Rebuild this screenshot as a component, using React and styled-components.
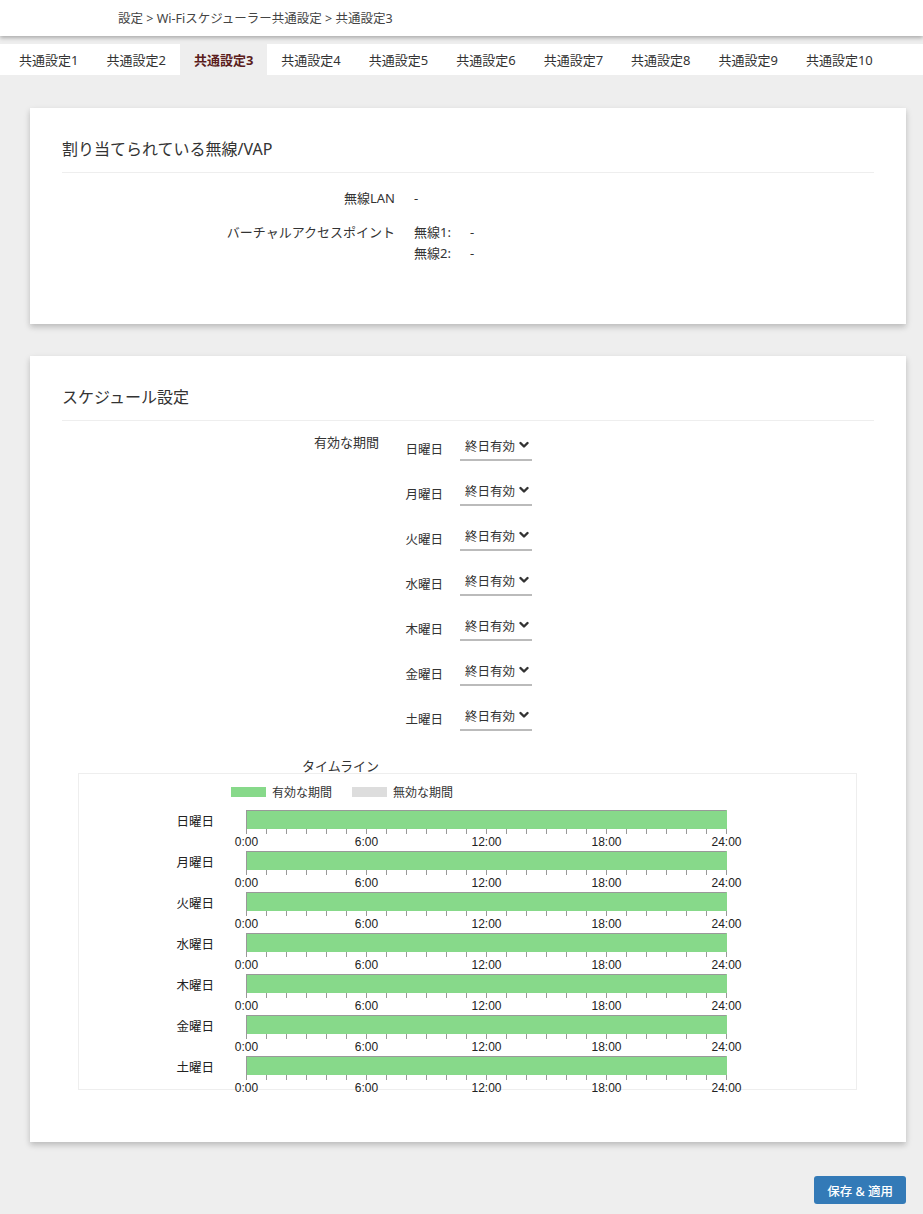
import styled, { createGlobalStyle } from 'styled-components';

const GlobalStyle = createGlobalStyle`
  body {
    margin: 0;
    background: #eeeeee;
    font-family: "Noto Sans", "Noto Sans CJK JP", sans-serif;
    color: #333333;
    font-size: 13px;
  }
`;

const tabs = ['共通設定1', '共通設定2', '共通設定3', '共通設定4', '共通設定5', '共通設定6', '共通設定7', '共通設定8', '共通設定9', '共通設定10'];
const days = ['日曜日', '月曜日', '火曜日', '水曜日', '木曜日', '金曜日', '土曜日'];

const Header = styled.header`
  height: 36px;
  background: #ffffff;
  box-shadow: 0 2px 4px rgba(0, 0, 0, 0.28);
  display: flex;
  align-items: center;
  padding-left: 118px;
  padding-bottom: 2px;
  box-sizing: border-box;
  font-size: 12.5px;
  color: #444444;
  position: relative;
  z-index: 1;
`;

const TabBar = styled.nav`
  margin-top: 8px;
  height: 31px;
  background: #ffffff;
  display: flex;
  padding-left: 5px;
`;

const Tab = styled.div`
  padding: 0 14px;
  display: flex;
  align-items: center;
  font-size: 13px;
  white-space: nowrap;
  background: ${(p) => (p.$active ? '#eeeeee' : 'transparent')};
  color: ${(p) => (p.$active ? '#5b1d1d' : '#333333')};
  font-weight: ${(p) => (p.$active ? 700 : 400)};
`;

const Main = styled.main`
  padding: 33px 17px 10px 30px;
  display: flex;
  flex-direction: column;
  gap: 32px;
`;

const Card = styled.section`
  background: #ffffff;
  box-shadow: 0 3px 6px rgba(0, 0, 0, 0.22);
  padding: 30px 32px ${(p) => p.$bottom ?? 32}px;
`;

const CardTitle = styled.h2`
  margin: 0;
  font-size: 16px;
  font-weight: 400;
  line-height: 22px;
  padding-bottom: 12px;
  border-bottom: 1px solid #eeeeee;
  color: #333333;
`;

const InfoList = styled.div`
  display: flex;
  flex-direction: column;
  gap: 13px;
  padding-top: 15px;
  padding-bottom: 60px;
`;

const InfoRow = styled.div`
  display: flex;
  gap: 19px;
  line-height: 21px;
`;

const InfoLabel = styled.div`
  width: ${(p) => p.$width}px;
  text-align: right;
  flex-shrink: 0;
`;

const InfoValues = styled.div`
  display: flex;
  flex-direction: column;
`;

const SubRow = styled.div`
  display: flex;
`;

const SubLabel = styled.span`
  width: 56px;
`;

const ScheduleRow = styled.div`
  display: flex;
  gap: 19px;
  padding-top: 12px;
`;

const PeriodLabel = styled.div`
  width: 317px;
  text-align: right;
  line-height: 18px;
  flex-shrink: 0;
`;

const DayList = styled.div`
  display: flex;
  flex-direction: column;
  gap: 17px;
`;

const DayRow = styled.div`
  display: flex;
  align-items: center;
  gap: 17px;
  height: 28px;
`;

const DayName = styled.span`
  width: 45px;
  text-align: right;
  font-size: 12.5px;
  padding-top: 2px;
`;

const SelectBox = styled.div`
  width: 72px;
  height: 28px;
  box-sizing: border-box;
  border-bottom: 2px solid #bbbbbb;
  display: flex;
  align-items: center;
  justify-content: space-between;
  padding: 0 3px 2px 5px;
  font-size: 12.5px;
  color: #333333;
`;

const TimelineTitle = styled.div`
  margin-top: 28px;
  padding-left: 240px;
  line-height: 14px;
  font-size: 13px;
`;

const TimelineBox = styled.div`
  margin: 0 17px 0 16px;
  height: 317px;
  border: 1px solid #eeeeee;
  box-sizing: border-box;
`;

const Legend = styled.div`
  display: flex;
  align-items: center;
  gap: 20px;
  padding: 8px 0 0 152px;
  height: 20px;
  font-size: 12px;
`;

const LegendItem = styled.div`
  display: flex;
  align-items: center;
  gap: 6px;
`;

const Swatch = styled.span`
  width: 35px;
  height: 10px;
  background: ${(p) => p.$color};
`;

const Rows = styled.div`
  padding-top: 8px;
`;

const ChartRow = styled.div`
  display: flex;
  height: 41px;
`;

const RowLabel = styled.div`
  width: 135px;
  text-align: right;
  line-height: 24px;
  font-size: 12.5px;
  color: #222222;
  margin-right: 16px;
`;

const ButtonBar = styled.div`
  display: flex;
  justify-content: flex-end;
  padding-top: 2px;
`;

const SaveButton = styled.button`
  height: 28px;
  padding: 0 13px;
  border: none;
  border-radius: 3px;
  background: #337ab7;
  color: #ffffff;
  font-family: "Noto Sans", "Noto Sans CJK JP", sans-serif;
  font-size: 12.5px;
  font-weight: 500;
`;

const Chevron = () => (
  <svg width="10" height="8" viewBox="0 0 10 8">
    <polyline points="1.5,2 5,5.5 8.5,2" fill="none" stroke="#333333" strokeWidth="2.4" strokeLinecap="round" strokeLinejoin="round" />
  </svg>
);

const DayAxis = () => {
  const ticks = Array.from({ length: 25 }, (_, i) => i);
  return (
    <svg width="520" height="41" style={{ overflow: 'visible' }}>
      <rect x="16" y="0" width="481" height="19" fill="#87d98a" />
      <line x1="16" y1="0.5" x2="496" y2="0.5" stroke="#999999" />
      <line x1="16.5" y1="0" x2="16.5" y2="24" stroke="#999999" />
      {ticks.map((t) => (
        <line key={t} x1={16.5 + t * 20} y1="19" x2={16.5 + t * 20} y2="24" stroke="#999999" />
      ))}
      {[0, 6, 12, 18, 24].map((h) => (
        <text
          key={h}
          x={16.5 + h * 20}
          y="36"
          textAnchor="middle"
          fontSize="12"
          fontFamily="Liberation Sans, Arial, sans-serif"
          fill="#222222">
          {h}:00
        </text>
      ))}
    </svg>
  );
};

export default function App() {
  return (
    <>
      <GlobalStyle />
      <Header>設定 &gt; Wi-Fiスケジューラー共通設定 &gt; 共通設定3</Header>
      <TabBar>
        {tabs.map((t) => (
          <Tab key={t} $active={t === '共通設定3'}>
            {t}
          </Tab>
        ))}
      </TabBar>
      <Main>
        <Card $bottom={0}>
          <CardTitle>割り当てられている無線/VAP</CardTitle>
          <InfoList>
            <InfoRow>
              <InfoLabel $width={333}>無線LAN</InfoLabel>
              <span>-</span>
            </InfoRow>
            <InfoRow>
              <InfoLabel $width={333}>バーチャルアクセスポイント</InfoLabel>
              <InfoValues>
                <SubRow>
                  <SubLabel>無線1:</SubLabel>
                  <span>-</span>
                </SubRow>
                <SubRow>
                  <SubLabel>無線2:</SubLabel>
                  <span>-</span>
                </SubRow>
              </InfoValues>
            </InfoRow>
          </InfoList>
        </Card>

        <Card $bottom={52}>
          <CardTitle>スケジュール設定</CardTitle>
          <ScheduleRow>
            <PeriodLabel>有効な期間</PeriodLabel>
            <DayList>
              {days.map((d) => (
                <DayRow key={d}>
                  <DayName>{d}</DayName>
                  <SelectBox>
                    <span>終日有効</span>
                    <Chevron />
                  </SelectBox>
                </DayRow>
              ))}
            </DayList>
          </ScheduleRow>
          <TimelineTitle>タイムライン</TimelineTitle>
          <TimelineBox>
            <Legend>
              <LegendItem>
                <Swatch $color="#87d98a" />
                有効な期間
              </LegendItem>
              <LegendItem>
                <Swatch $color="#dddddd" />
                無効な期間
              </LegendItem>
            </Legend>
            <Rows>
              {days.map((d) => (
                <ChartRow key={d}>
                  <RowLabel>{d}</RowLabel>
                  <DayAxis />
                </ChartRow>
              ))}
            </Rows>
          </TimelineBox>
        </Card>

        <ButtonBar>
          <SaveButton type="button">保存 &amp; 適用</SaveButton>
        </ButtonBar>
      </Main>
    </>
  );
}
